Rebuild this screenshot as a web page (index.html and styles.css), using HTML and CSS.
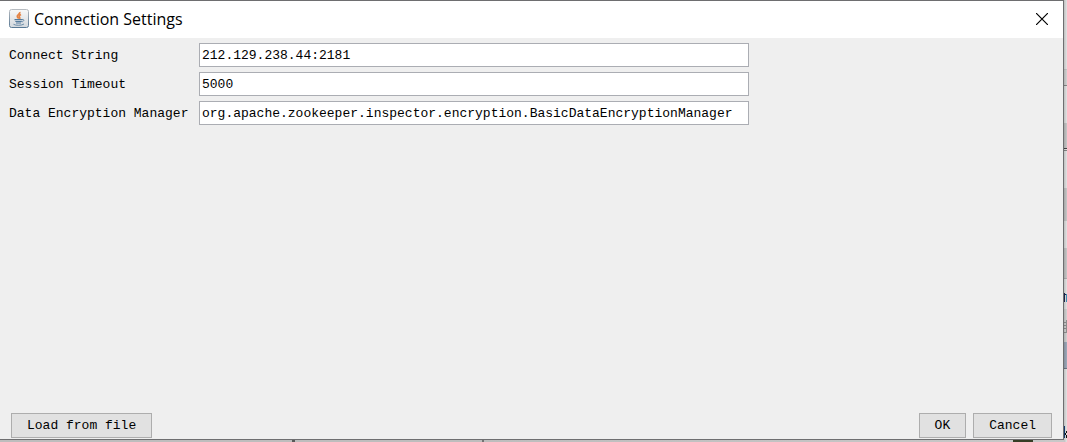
FILE: index.html
```html
<!DOCTYPE html>
<html lang="en">
<head>
<meta charset="utf-8">
<meta name="viewport" content="width=device-width, initial-scale=1">
<title>Connection Settings</title>
<link rel="stylesheet" href="styles.css">
</head>
<body class="desktop">
<form class="dialog" role="dialog" aria-labelledby="dialog-title">
  <header class="titlebar">
    <svg class="app-icon" viewBox="0 0 20 20" aria-hidden="true">
      <defs>
        <linearGradient id="tile" x1="0" y1="0" x2="0" y2="1">
          <stop offset="0" stop-color="#f8f8f8"/>
          <stop offset="1" stop-color="#d3d8dd"/>
        </linearGradient>
        <linearGradient id="edge" x1="0" y1="0" x2="0" y2="1">
          <stop offset="0" stop-color="#b6bbc0"/>
          <stop offset="1" stop-color="#587894"/>
        </linearGradient>
      </defs>
      <rect x="0.5" y="0.5" width="19" height="18" rx="2" fill="url(#tile)" stroke="url(#edge)"/>
      <path d="M10.800 3c.8 2-3.300 2.600-2.500 4.700.3.900 1.200 1.300 1.200 2M12 5.500c-1.800 1-2.300 1.700-1.400 2.700.5.600.3 1.200-.3 1.700" fill="none" stroke="#e58445" stroke-width="1.700"/>
      <path d="M5.500 10.700h8M6.300 12.500h6.500M7 14h5" fill="none" stroke="#547b9d" stroke-width="1.200"/>
      <path d="M13 10.500c2.500-.6 2.500 1.700-.2 2.500M4.500 15.300c2 1.400 8.500 1.300 10.500-.3" fill="none" stroke="#6c8ca8"/>
    </svg>
    <h1 class="title" id="dialog-title">Connection Settings</h1>
    <button class="close" type="button" aria-label="Close">
      <svg class="close-icon" viewBox="0 0 12 12" aria-hidden="true"><path d="M0 0 12 12M12 0 0 12" fill="none" stroke="#000" stroke-width="1.200"/></svg>
    </button>
  </header>
  <main class="fields">
    <label class="label" for="connect">Connect String</label>
    <input class="field" id="connect" type="text" value="212.129.238.44:2181">
    <label class="label" for="timeout">Session Timeout</label>
    <input class="field" id="timeout" type="text" value="5000">
    <label class="label" for="manager">Data Encryption Manager</label>
    <input class="field" id="manager" type="text" value="org.apache.zookeeper.inspector.encryption.BasicDataEncryptionManager">
  </main>
  <footer class="actions">
    <button class="button load" type="button">Load from file</button>
    <button class="button" type="submit">OK</button>
    <button class="button" type="button">Cancel</button>
  </footer>
</form>
<svg class="backdrop" viewBox="0 0 3 442" aria-hidden="true">
  <defs>
    <linearGradient id="shade" x1="0" y1="0" x2="1" y2="0">
      <stop offset="0" stop-color="#000" stop-opacity=".16"/>
      <stop offset="1" stop-color="#000" stop-opacity="0"/>
    </linearGradient>
  </defs>
  <path fill="#e4e4e4" d="M0 0h3v442H0z"/>
  <path fill="#c8c8c8" d="M0 69h3v1H0zM0 123h3v25H0zM0 188h3v33H0zM0 248h3v30H0z"/>
  <path fill="#d4d4d4" d="M0 70h3v15H0zM0 309h3v33H0z"/>
  <path fill="#888" d="M0 85h3v1H0zM0 150h3v1H0z"/>
  <path fill="#444" d="M0 148h3v1H0z"/>
  <path fill="#b0b0b0" d="M0 278h3v1H0z"/>
  <path fill="#1b2552" d="M0 293h1v9H0zM1 294h1v1H1z"/>
  <path fill="#3e8fb5" d="M2 294h1v8H2z"/>
  <path fill="#929292" d="M0 322h3v1H0zM0 325h3v1H0zM0 328h3v1H0zM0 332h3v1H0zM2 320h1v13H2z"/>
  <path fill="#9eaabb" d="M0 342h3v26H0z"/>
  <path fill="#6c7885" d="M0 368h3v1H0z"/>
  <path fill="#123f78" d="M0 426h1v12H0z"/>
  <path fill="#111" d="M1 433h1v2H1zM2 431h1v2H2zM2 435h1v3H2z"/>
  <path fill="url(#shade)" d="M0 0h3v442H0z"/>
</svg>
</body>
</html>
```
FILE: styles.css
```css
* {
  box-sizing: border-box;
}

.desktop {
  margin: 0;
  min-height: 100vh;
  display: flex;
  padding: 0 3px 2px 0;
  background:
    linear-gradient(#595959, #595959) 292px 100% / 3px 2px no-repeat,
    linear-gradient(#737373, #737373) 482px 100% / 2px 2px no-repeat,
    linear-gradient(#363d25, #363d25) 1013px 100% / 20px 2px no-repeat,
    linear-gradient(90deg, #bdbdbd 45%, #c8c8c8);
}

.dialog {
  flex: 1;
  display: flex;
  flex-direction: column;
  background: #efefef;
  border: solid #6e6e70;
  border-width: 1px 1px 1px 0;
  font: 13px/16px "Liberation Mono", monospace;
  color: #000;
}

.titlebar {
  display: flex;
  align-items: center;
  gap: 5px;
  height: 37px;
  padding: 0 15px 1px 9px;
  background: #fff;
}

.app-icon {
  width: 20px;
  height: 20px;
}

.title {
  flex: 1;
  margin: 0;
  font: 400 16px/20px "Open Sans", "Noto Sans", sans-serif;
}

.close {
  display: flex;
  padding: 0;
  border: 0;
  background: none;
}

.close-icon {
  width: 12px;
  height: 12px;
}

.fields {
  flex: 1;
  display: grid;
  grid-template-columns: 186px minmax(0, 550px);
  grid-auto-rows: 24px;
  gap: 5px 4px;
  padding: 5px 9px;
}

.label {
  line-height: 26px;
  white-space: nowrap;
}

.field {
  width: 100%;
  height: 24px;
  padding: 0 2px;
  border: 1px solid #abadb3;
  border-radius: 0;
  background: #fff;
  color: inherit;
  font: inherit;
  outline: 0;
}

.actions {
  display: flex;
  gap: 7px;
  padding: 0 11px 1px;
}

.button {
  height: 25px;
  padding: 0 15px;
  border: 1px solid #adadad;
  border-radius: 0;
  background: #e1e1e1;
  color: inherit;
  font: inherit;
}

.load {
  margin-right: auto;
}

.backdrop {
  position: absolute;
  top: 0;
  right: 0;
  width: 3px;
  height: 442px;
}
```
